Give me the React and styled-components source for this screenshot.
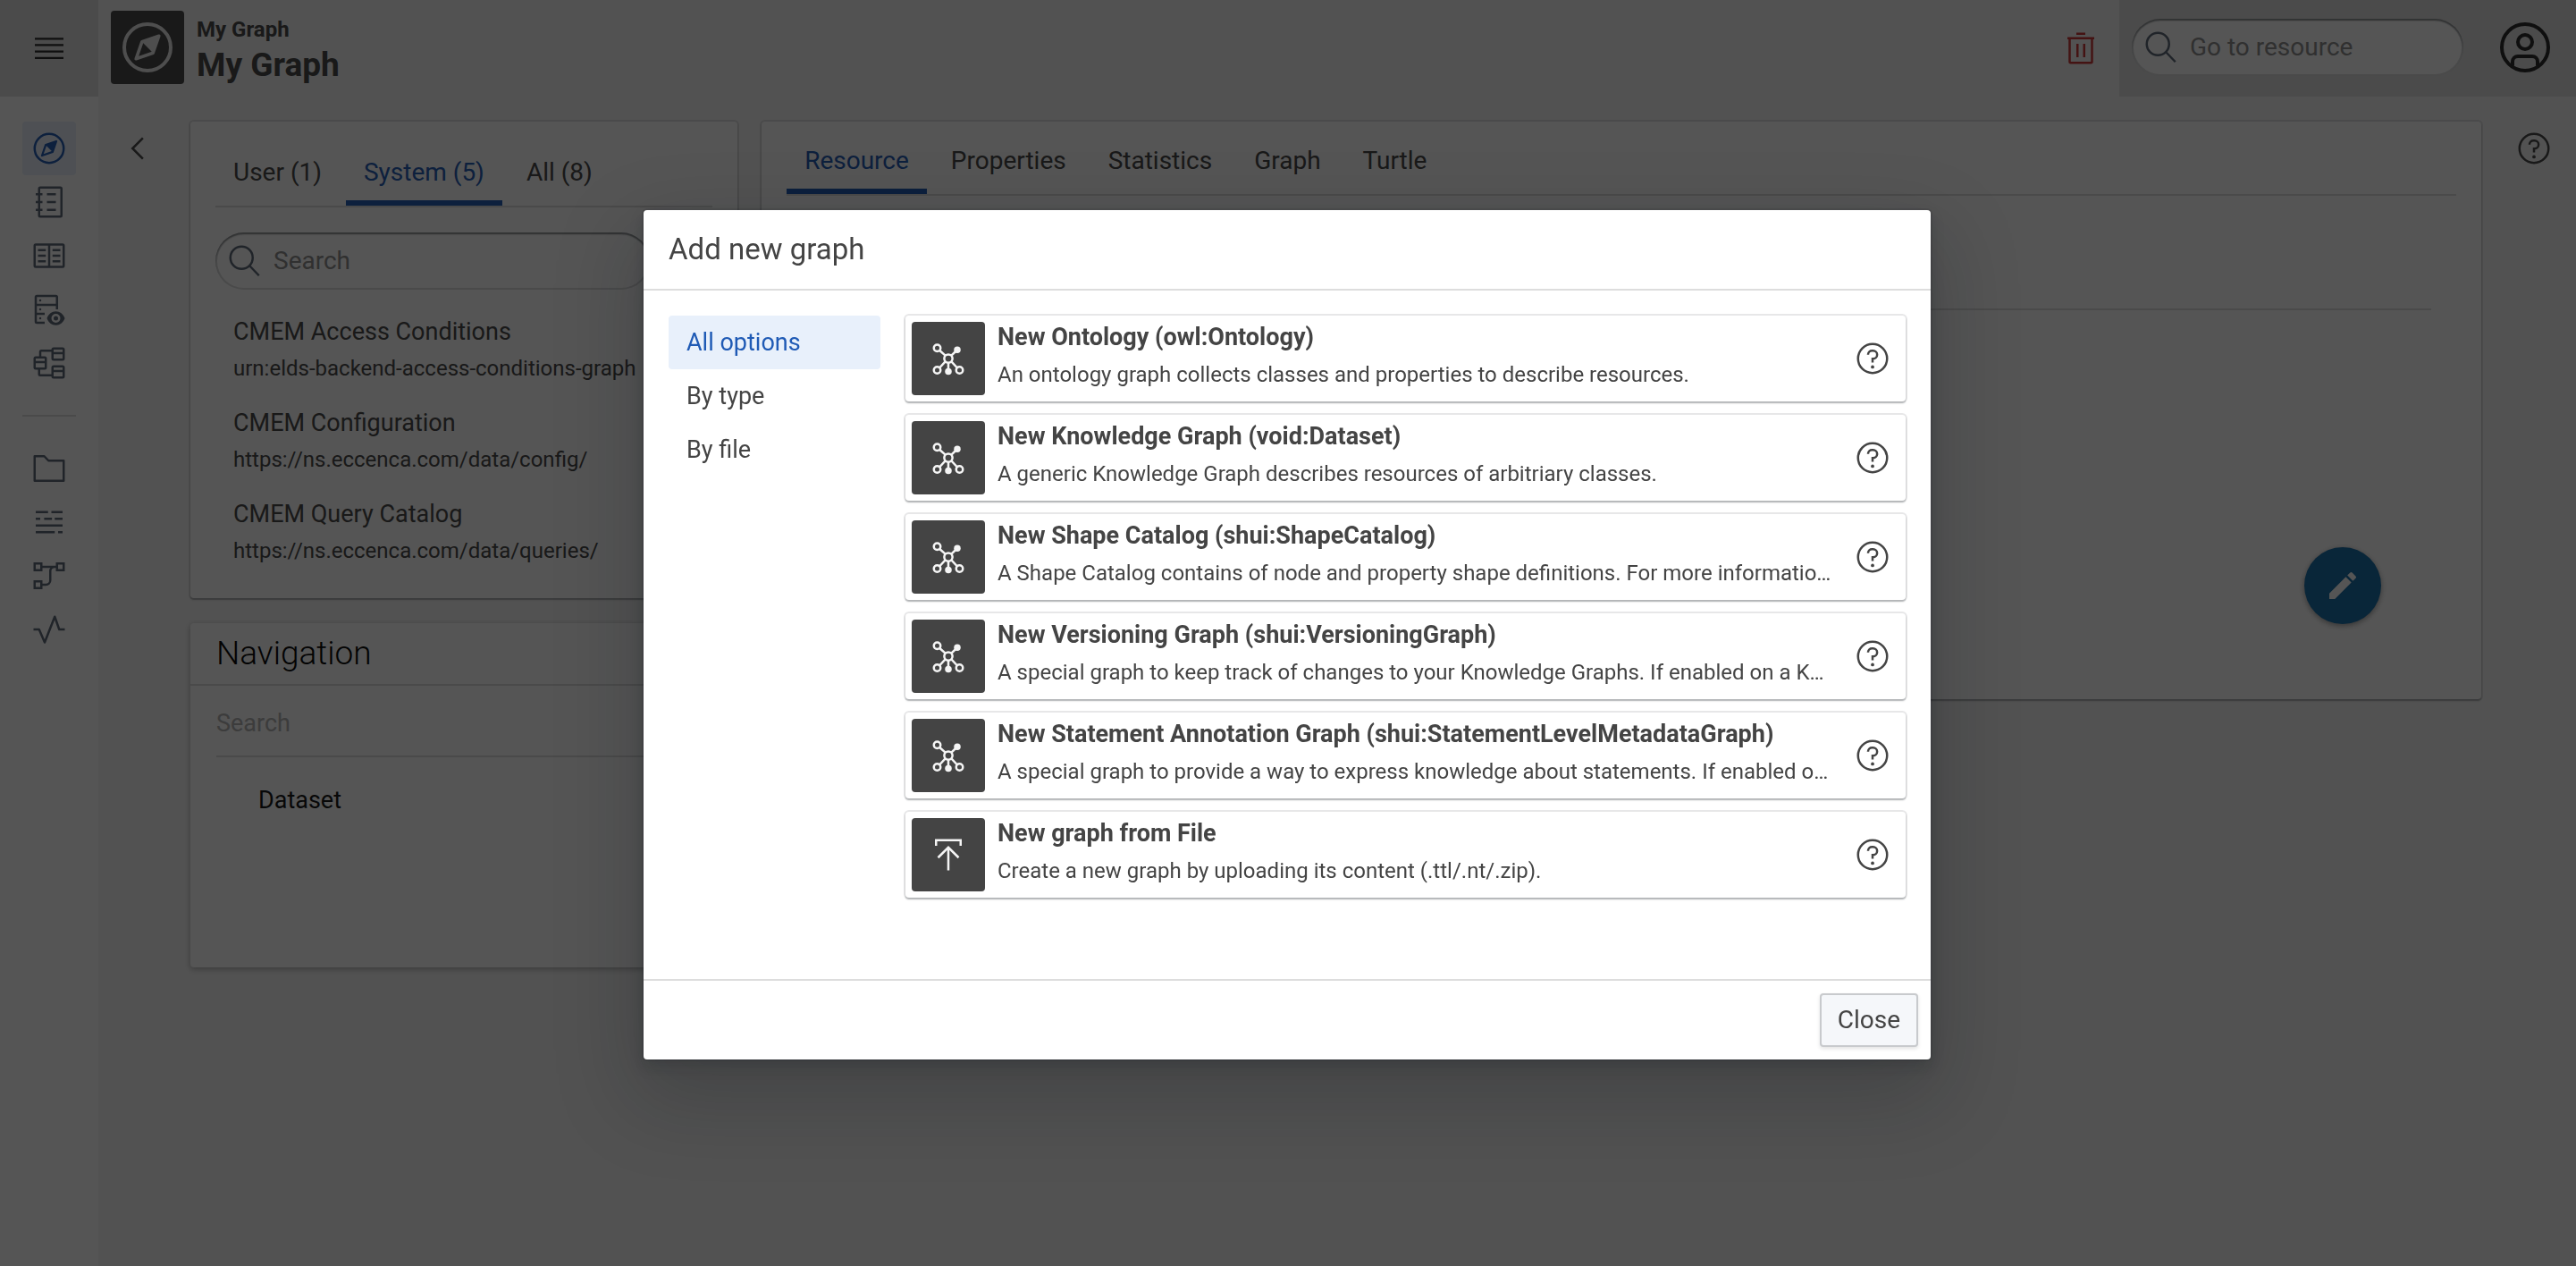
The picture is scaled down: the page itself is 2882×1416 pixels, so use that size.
import React from "react";
import styled, { createGlobalStyle } from "styled-components";

const color = {
  text: "#444444",
  ink: "#262626",
  accent: "#1f5ab5",
  accentSoft: "#e8f0fb",
  page: "#f5f5f5",
  bar: "#e0e0e0",
  line: "#dddddd",
  muted: "#8c8c8c",
  icon: "#5c6778",
};

const GlobalStyle = createGlobalStyle`
  *, *::before, *::after { box-sizing: border-box; }
  body {
    margin: 0;
    background: ${color.page};
    color: ${color.text};
    font: 400 28px/40px Roboto, "Liberation Sans", sans-serif;
  }
  button, input { font: inherit; color: inherit; }
  h1, h2, h3, p, ul { margin: 0; padding: 0; }
  ul { list-style: none; }
  a { color: inherit; text-decoration: none; }
`;

/* ---------- icons, all on a 32 unit grid ---------- */

const Svg = styled.svg`
  display: block;
  flex: none;
  width: ${(p) => p.$size || 40}px;
  height: ${(p) => p.$size || 40}px;
  fill: none;
  stroke: currentColor;
  stroke-width: 2;
`;

const Icon = ({ size, children }) => (
  <Svg $size={size} viewBox="0 0 32 32" aria-hidden="true">
    {children}
  </Svg>
);

const solid = { fill: "currentColor", stroke: "none" };

const MenuIcon = () => (
  <Icon>
    <path d="M3.2 7.4h25.6M3.2 13.1h25.6M3.2 18.9h25.6M3.2 24.6h25.6" strokeWidth="1.8" />
  </Icon>
);
const CompassIcon = ({ size }) => (
  <Icon size={size}>
    <circle cx="16" cy="16" r="13" />
    <path d="M22.4 9.6 12.9 12.9 9.6 22.4 19.1 19.1z" strokeLinejoin="round" strokeWidth="1.8" />
    <path d="M22.4 9.6 12.9 12.9 19.1 19.1z" {...solid} />
  </Icon>
);
const NotebookIcon = () => (
  <Icon>
    <rect x="7" y="3" width="20" height="26" rx="1" />
    <path d="M4 9h6M4 16h6M4 23h6M14 9h8M14 16h8M14 23h8" />
  </Icon>
);
const CatalogIcon = () => (
  <Icon>
    <rect x="3" y="6" width="26" height="20" rx="1" />
    <path d="M16 6v20M6 11h7M6 16h7M6 21h7M19 11h7M19 16h7M19 21h7" />
  </Icon>
);
const ServerViewIcon = () => (
  <Icon>
    <path d="M23 16V5a1 1 0 0 0-1-1H5a1 1 0 0 0-1 1v22a1 1 0 0 0 1 1h7M4 12h19M4 20h8" />
    <circle cx="8" cy="8" r="1" {...solid} />
    <circle cx="8" cy="16" r="1" {...solid} />
    <circle cx="8" cy="24" r="1" {...solid} />
    <path
      {...solid}
      fillRule="evenodd"
      d="M22 17.8c-3.6 0-6.6 2.4-8 6.2 1.4 3.8 4.4 6.2 8 6.2s6.6-2.4 8-6.2c-1.4-3.8-4.4-6.2-8-6.2zm0 10.2a4 4 0 1 1 0-8 4 4 0 0 1 0 8z"
    />
    <circle cx="22" cy="24" r="2" {...solid} />
  </Icon>
);
const StructureIcon = () => (
  <Icon>
    <rect x="19" y="3" width="10" height="10" rx="1" />
    <rect x="3" y="11" width="10" height="10" rx="1" />
    <rect x="19" y="19" width="10" height="10" rx="1" />
    <path d="M19 7.2h10M3 15.2h10M19 23.2h10M8 11V6a1 1 0 0 1 1-1h10M7 21v5a1 1 0 0 0 1 1h11" />
  </Icon>
);
const FolderIcon = () => (
  <Icon>
    <path d="M3 5h8.6l3.8 4H29v18H3z" strokeLinejoin="round" />
  </Icon>
);
const RulesIcon = () => (
  <Icon>
    <path d="M4 7h11M18 7h10M4 13h4M11.5 13h7M21 13h7M4 19h24M4 25h17M24 25h4" />
  </Icon>
);
const FlowIcon = () => (
  <Icon>
    <rect x="3" y="5" width="6" height="6" />
    <rect x="23" y="5" width="6" height="6" />
    <rect x="3" y="21" width="6" height="6" />
    <path d="M9 8h14M21 8a4 4 0 0 0-4 4v8a4 4 0 0 1-4 4H9" />
  </Icon>
);
const ActivityIcon = () => (
  <Icon>
    <path d="M2 16h5l5 11.6L21 4.6 25 16h5" strokeLinejoin="round" />
  </Icon>
);
const ChevronIcon = () => (
  <Icon>
    <path d="M20.7 6.7 11.4 16l9.3 9.3" />
  </Icon>
);
const TrashIcon = () => (
  <Icon>
    <path d="M13 12v12M19 12v12M4 7h24M12 3h8M6 7v21a1 1 0 0 0 1 1h18a1 1 0 0 0 1-1V7" />
  </Icon>
);
const SearchIcon = () => (
  <Icon>
    <circle cx="13" cy="13" r="10" />
    <path d="M20.2 20.2 28.6 29" />
  </Icon>
);
const UserIcon = () => (
  <Icon size={64}>
    <circle cx="16" cy="16" r="13" />
    <circle cx="16" cy="13" r="4" />
    <path d="M9 26.4V24a3 3 0 0 1 3-3h8a3 3 0 0 1 3 3v2.4" />
  </Icon>
);
const HelpIcon = () => (
  <Icon>
    <circle cx="16" cy="16" r="13" />
    <path d="M12 12.6v-.4A3.5 3.5 0 0 1 15.5 9h1a3.5 3.5 0 0 1 0 7.2H16v3.4" />
    <circle cx="16" cy="23.5" r="1.5" {...solid} />
  </Icon>
);
const HubIcon = () => (
  <Icon>
    <circle cx="16" cy="16" r="3.7" />
    <circle cx="6" cy="6.6" r="3" />
    <circle cx="6" cy="26.4" r="3" />
    <circle cx="26" cy="26.4" r="3" />
    <circle cx="24" cy="8.2" r="3" {...solid} />
    <circle cx="16" cy="27.6" r="3" {...solid} />
    <path d="M8.2 8.8 13.3 13.3M23 9.2 18.7 13.3M8.2 24.2 13.3 18.7M23.8 24.2 18.7 18.7M16 19.7V26" />
  </Icon>
);
const UploadIcon = () => (
  <Icon>
    <path d="M5 8V3h22v5M16 30V10M6.8 18.6 16 9.4l9.2 9.2" />
  </Icon>
);
const PencilIcon = () => (
  <Svg viewBox="0 0 24 24" aria-hidden="true">
    <path
      {...solid}
      d="M3 17.25V21h3.75L17.81 9.94l-3.75-3.75L3 17.25zM20.71 7.04a1 1 0 0 0 0-1.41l-2.34-2.34a1 1 0 0 0-1.41 0l-1.83 1.83 3.75 3.75 1.83-1.83z"
    />
  </Svg>
);

/* ---------- shell ---------- */

const Shell = styled.div`
  display: grid;
  grid-template: 108px 1fr / 110px minmax(0, 1fr);
  min-height: 100vh;
`;

const IconButton = styled.button`
  display: flex;
  align-items: center;
  justify-content: center;
  flex: none;
  padding: 0;
  border: 0;
  background: none;
  color: ${(p) => p.$color || color.text};
`;

const MenuCorner = styled.div`
  display: flex;
  align-items: center;
  justify-content: center;
  background: ${color.bar};
`;

const Header = styled.header`
  display: flex;
  align-items: stretch;
`;

const Brand = styled.div`
  display: flex;
  flex: 1;
  gap: 14px;
  padding: 12px 14px;
`;

const IconTile = styled.span`
  display: flex;
  align-items: center;
  justify-content: center;
  flex: none;
  width: 82px;
  height: 82px;
  border-radius: 4px;
  background: ${color.text};
  color: ${(p) => p.$glyph || "#f5f5f5"};
`;

const BrandText = styled.div`
  padding-top: 5px;
`;

const Crumb = styled.p`
  font-size: 24px;
  font-weight: 700;
  line-height: 32px;
`;

const PageTitle = styled.h1`
  font-size: 37px;
  font-weight: 700;
  line-height: 48px;
`;

const HeaderActions = styled.div`
  display: flex;
  align-items: center;
  padding-right: 23px;
`;

const Toolbar = styled.div`
  display: flex;
  align-items: center;
  gap: 37px;
  padding: 0 25px 3px 14px;
  background: ${color.bar};
`;

const SearchPill = styled.label`
  display: flex;
  align-items: center;
  gap: 12px;
  width: ${(p) => p.$width};
  height: 64px;
  padding: 0 20px 0 13px;
  border-radius: 32px;
  background: #fff;
  color: ${color.icon};
  box-shadow: inset 0 0 0 2px rgba(16, 22, 26, 0.15), inset 0 2px 2px rgba(16, 22, 26, 0.4);
`;

const PillInput = styled.input`
  flex: 1;
  min-width: 0;
  padding: 0;
  border: 0;
  outline: 0;
  background: none;
  color: ${color.text};
  &::placeholder {
    color: ${color.muted};
    opacity: 1;
  }
`;

const Rail = styled.nav`
  display: flex;
  flex-direction: column;
  align-items: center;
  gap: 28px;
  padding-top: 28px;
  background: #fff;
`;

const RailGroup = styled.ul`
  display: flex;
  flex-direction: column;
`;

const RailLink = styled.a`
  display: flex;
  align-items: center;
  justify-content: center;
  width: 60px;
  height: 60px;
  border-radius: 4px;
  background: ${(p) => (p.$active ? color.accentSoft : "transparent")};
  color: ${(p) => (p.$active ? color.accent : color.icon)};
`;

const RailRule = styled.hr`
  width: 60px;
  margin: 0;
  border: 0;
  border-top: 2px solid ${color.line};
`;

const Main = styled.main`
  display: grid;
  grid-template-columns: 40px minmax(0, 1fr) 40px;
  gap: 39px;
  align-items: start;
  padding: 28px 27px 28px 24px;
`;

const Columns = styled.div`
  display: grid;
  grid-template-columns: minmax(0, 7fr) minmax(0, 22fr);
  gap: 27px;
  align-items: start;
`;

const SideButton = styled(IconButton)`
  height: 60px;
`;

const Stack = styled.div`
  display: flex;
  flex-direction: column;
  gap: 28px;
`;

const Card = styled.section`
  border-radius: 4px;
  background: #fff;
  box-shadow: 0 0 0 2px rgba(16, 22, 26, 0.1), 0 2px 2px rgba(16, 22, 26, 0.25);
`;

const GraphCard = styled(Card)`
  padding: 37px 28px 24px;
`;

const ResourceCard = styled(Card)`
  padding: 24px 28px 84px;
`;

const NavCard = styled(Card)`
  min-height: 385px;
  box-shadow: 0 2px 6px rgba(0, 0, 0, 0.3);
`;

const Tabs = styled.div`
  display: flex;
  gap: 7px;
  border-bottom: 2px solid ${color.line};
`;

const Tab = styled.button`
  padding: 0 20px 11px;
  border: 0;
  border-bottom: 6px solid ${(p) => (p.$active ? color.accent : "transparent")};
  background: none;
  color: ${(p) => (p.$active ? color.accent : color.text)};
  line-height: 40px;
`;

const SearchRow = styled.div`
  padding: 28px 0 15px;
`;

const GraphLink = styled.a`
  display: flex;
  flex-direction: column;
  gap: 4px;
  padding: 12px 20px;
`;

const GraphName = styled.span`
  font-size: 27px;
`;

const GraphUri = styled.span`
  font-size: 24px;
  line-height: 34px;
  white-space: nowrap;
`;

const NavHeading = styled.h2`
  padding: 10px 29px;
  border-bottom: 2px solid ${color.line};
  color: #000;
  font-size: 37px;
  font-weight: 300;
  line-height: 48px;
`;

const NavBody = styled.div`
  padding: 0 29px;
`;

const LineInput = styled.input`
  width: 100%;
  height: 80px;
  padding: 6px 0 0;
  border: 0;
  border-bottom: 2px solid ${color.line};
  outline: 0;
  background: none;
  font-size: 27px;
  &::placeholder {
    color: #b0b0b0;
    opacity: 1;
  }
`;

const TreeItem = styled.li`
  padding: 28px 47px;
  color: #111;
  font-size: 27px;
`;

const ResourceHead = styled.div`
  height: 128px;
  margin: 0 28px;
  border-bottom: 2px solid ${color.line};
`;

const ResourceBody = styled.div`
  display: flex;
  align-items: flex-end;
  justify-content: flex-end;
  height: 351px;
  padding-right: 84px;
`;

const EditButton = styled.button`
  display: flex;
  align-items: center;
  justify-content: center;
  width: 86px;
  height: 86px;
  padding: 0;
  border: 0;
  border-radius: 50%;
  background: #146ca7;
  color: #fff;
  box-shadow: 0 2px 6px rgba(0, 0, 0, 0.4);
`;

/* ---------- dialog ---------- */

const Backdrop = styled.div`
  position: fixed;
  inset: 0;
  display: flex;
  align-items: center;
  justify-content: center;
  padding: 4px 2px 0 0;
  background: rgba(5, 5, 5, 0.68);
`;

const Dialog = styled.div`
  display: flex;
  flex-direction: column;
  width: 1440px;
  max-width: 90%;
  border-radius: 4px;
  background: #fff;
  box-shadow: 0 0 0 2px rgba(16, 22, 26, 0.1), 0 8px 16px rgba(16, 22, 26, 0.2),
    0 36px 92px 12px rgba(16, 22, 26, 0.2);
`;

const DialogHeader = styled.header`
  padding: 24px 28px;
  border-bottom: 2px solid ${color.line};
`;

const DialogTitle = styled.h2`
  font-size: 33px;
  font-weight: 400;
  line-height: 40px;
`;

const DialogBody = styled.div`
  display: grid;
  grid-template-columns: 237px minmax(0, 1fr);
  gap: 28px;
  min-height: 770px;
  padding: 28px;
`;

const FilterButton = styled.button`
  display: block;
  width: 100%;
  height: 60px;
  padding: 0 20px;
  border: 0;
  border-radius: 4px;
  background: ${(p) => (p.$active ? color.accentSoft : "transparent")};
  color: ${(p) => (p.$active ? color.accent : color.text)};
  font-size: 27px;
  text-align: left;
`;

const OptionList = styled.ul`
  display: flex;
  flex-direction: column;
  gap: 15px;
`;

const Option = styled.li`
  display: flex;
  align-items: center;
  gap: 14px;
  padding: 7px;
  border-radius: 4px;
  background: #fff;
  box-shadow: 0 0 0 2px rgba(16, 22, 26, 0.1), 0 2px 2px rgba(16, 22, 26, 0.25);
`;

const OptionText = styled.div`
  display: flex;
  flex: 1;
  flex-direction: column;
  gap: 6px;
  min-width: 0;
  padding-bottom: 2px;
`;

const OptionTitle = styled.h3`
  font-size: 27px;
  font-weight: 700;
  line-height: 32px;
`;

const OptionNote = styled.p`
  overflow: hidden;
  font-size: 24px;
  line-height: 40px;
  text-overflow: ellipsis;
  white-space: nowrap;
`;

const OptionHelp = styled(IconButton)`
  width: 60px;
  height: 60px;
`;

const DialogFooter = styled.footer`
  display: flex;
  justify-content: flex-end;
  padding: 14px;
  border-top: 2px solid ${color.line};
`;

const CloseButton = styled.button`
  height: 60px;
  padding: 0 18px;
  border: 2px solid #c8cacd;
  border-radius: 4px;
  background: #f5f7fa;
  box-shadow: 0 2px 4px rgba(16, 22, 26, 0.12);
`;

/* ---------- data ---------- */

const railTop = [
  ["Explore", CompassIcon],
  ["Vocabularies", NotebookIcon],
  ["Thesauri", CatalogIcon],
  ["Queries", ServerViewIcon],
  ["Linking", StructureIcon],
];
const railBottom = [
  ["Projects", FolderIcon],
  ["Datasets", RulesIcon],
  ["Workflows", FlowIcon],
  ["Activities", ActivityIcon],
];

const graphs = [
  ["CMEM Access Conditions", "urn:elds-backend-access-conditions-graph"],
  ["CMEM Configuration", "https://ns.eccenca.com/data/config/"],
  ["CMEM Query Catalog", "https://ns.eccenca.com/data/queries/"],
];

const options = [
  ["New Ontology (owl:Ontology)", "An ontology graph collects classes and properties to describe resources.", HubIcon],
  ["New Knowledge Graph (void:Dataset)", "A generic Knowledge Graph describes resources of arbitriary classes.", HubIcon],
  [
    "New Shape Catalog (shui:ShapeCatalog)",
    "A Shape Catalog contains of node and property shape definitions. For more informatio…",
    HubIcon,
  ],
  [
    "New Versioning Graph (shui:VersioningGraph)",
    "A special graph to keep track of changes to your Knowledge Graphs. If enabled on a K…",
    HubIcon,
  ],
  [
    "New Statement Annotation Graph (shui:StatementLevelMetadataGraph)",
    "A special graph to provide a way to express knowledge about statements. If enabled o…",
    HubIcon,
  ],
  ["New graph from File", "Create a new graph by uploading its content (.ttl/.nt/.zip).", UploadIcon],
];

const RailItems = ({ items, active }) => (
  <RailGroup>
    {items.map(([label, Glyph]) => (
      <li key={label}>
        <RailLink href="#" aria-label={label} $active={label === active}>
          <Glyph />
        </RailLink>
      </li>
    ))}
  </RailGroup>
);

const TabBar = ({ items, active }) => (
  <Tabs role="tablist">
    {items.map((label) => (
      <Tab key={label} role="tab" aria-selected={label === active} $active={label === active}>
        {label}
      </Tab>
    ))}
  </Tabs>
);

const SearchField = ({ placeholder, width }) => (
  <SearchPill $width={width}>
    <SearchIcon />
    <PillInput type="text" aria-label={placeholder} placeholder={placeholder} />
  </SearchPill>
);

function AddGraphDialog() {
  return (
    <Backdrop>
      <Dialog role="dialog" aria-modal="true" aria-labelledby="dialog-title">
        <DialogHeader>
          <DialogTitle id="dialog-title">Add new graph</DialogTitle>
        </DialogHeader>
        <DialogBody>
          <div>
            {["All options", "By type", "By file"].map((label, i) => (
              <FilterButton key={label} $active={i === 0}>
                {label}
              </FilterButton>
            ))}
          </div>
          <OptionList>
            {options.map(([title, note, Glyph]) => (
              <Option key={title}>
                <IconTile>
                  <Glyph />
                </IconTile>
                <OptionText>
                  <OptionTitle>{title}</OptionTitle>
                  <OptionNote>{note}</OptionNote>
                </OptionText>
                <OptionHelp aria-label={`Help: ${title}`}>
                  <HelpIcon />
                </OptionHelp>
              </Option>
            ))}
          </OptionList>
        </DialogBody>
        <DialogFooter>
          <CloseButton>Close</CloseButton>
        </DialogFooter>
      </Dialog>
    </Backdrop>
  );
}

export default function App() {
  return (
    <>
      <GlobalStyle />
      <Shell>
        <MenuCorner>
          <IconButton aria-label="Menu" $color={color.ink}>
            <MenuIcon />
          </IconButton>
        </MenuCorner>
        <Header>
          <Brand>
            <IconTile $glyph="#e8e8e8">
              <CompassIcon size={64} />
            </IconTile>
            <BrandText>
              <Crumb>My Graph</Crumb>
              <PageTitle>My Graph</PageTitle>
            </BrandText>
          </Brand>
          <HeaderActions>
            <IconButton aria-label="Delete" $color="#c93434">
              <TrashIcon />
            </IconButton>
          </HeaderActions>
          <Toolbar>
            <SearchField placeholder="Go to resource" width="371px" />
            <IconButton aria-label="User menu" $color={color.ink}>
              <UserIcon />
            </IconButton>
          </Toolbar>
        </Header>

        <Rail aria-label="Main">
          <RailItems items={railTop} active="Explore" />
          <RailRule />
          <RailItems items={railBottom} />
        </Rail>

        <Main>
          <SideButton aria-label="Collapse">
            <ChevronIcon />
          </SideButton>
          <Columns>
            <Stack>
              <GraphCard aria-label="Graphs">
                <TabBar items={["User (1)", "System (5)", "All (8)"]} active="System (5)" />
                <SearchRow>
                  <SearchField placeholder="Search" width="calc(100% - 70px)" />
                </SearchRow>
                <ul>
                  {graphs.map(([name, uri]) => (
                    <li key={name}>
                      <GraphLink href="#">
                        <GraphName>{name}</GraphName>
                        <GraphUri>{uri}</GraphUri>
                      </GraphLink>
                    </li>
                  ))}
                </ul>
              </GraphCard>
              <NavCard>
                <NavHeading>Navigation</NavHeading>
                <NavBody>
                  <LineInput type="text" aria-label="Search navigation" placeholder="Search" />
                  <ul>
                    <TreeItem>Dataset</TreeItem>
                  </ul>
                </NavBody>
              </NavCard>
            </Stack>
            <ResourceCard aria-label="Resource">
              <TabBar
                items={["Resource", "Properties", "Statistics", "Graph", "Turtle"]}
                active="Resource"
              />
              <ResourceHead />
              <ResourceBody>
                <EditButton aria-label="Edit">
                  <PencilIcon />
                </EditButton>
              </ResourceBody>
            </ResourceCard>
          </Columns>
          <SideButton aria-label="Help">
            <HelpIcon />
          </SideButton>
        </Main>
      </Shell>
      <AddGraphDialog />
    </>
  );
}
